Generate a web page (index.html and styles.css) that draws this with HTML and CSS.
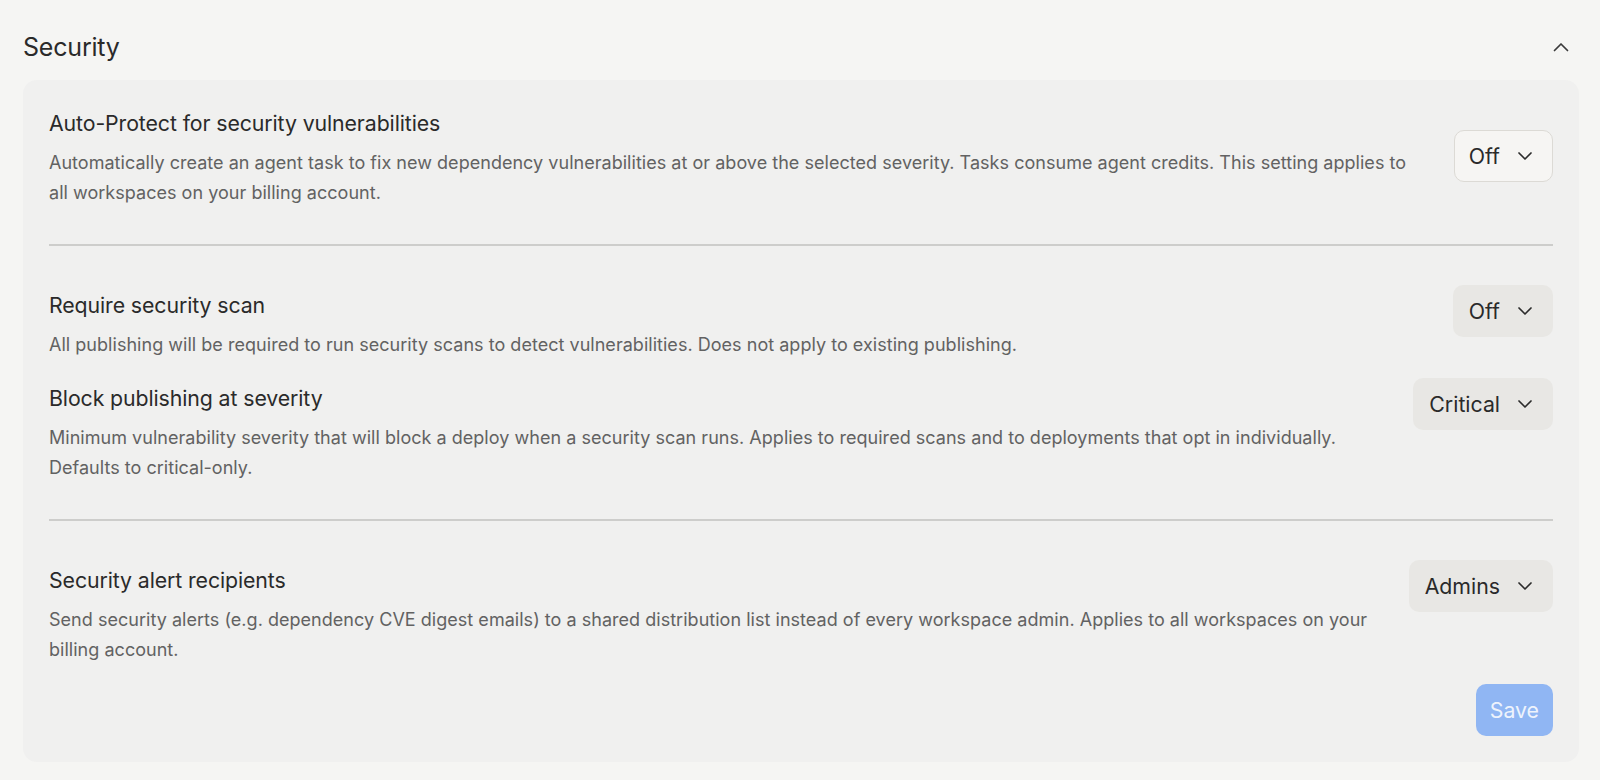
FILE: index.html
```html
<!DOCTYPE html>
<html lang="en">
<head>
<meta charset="utf-8">
<title>Security settings</title>
<link rel="stylesheet" href="styles.css">
</head>
<body>
<div class="page">
  <header class="section-head">
    <h2 class="section-title">Security</h2>
    <button class="collapse" aria-label="Collapse">
      <svg width="16" height="10" viewBox="0 0 16 10"><path d="M1.5 8.5 L8 2 L14.5 8.5" fill="none" stroke="#3a3a3a" stroke-width="1.7" stroke-linecap="round" stroke-linejoin="round"/></svg>
    </button>
  </header>

  <section class="card">
    <div class="row row-first">
      <div class="text">
        <div class="title">Auto-Protect for security vulnerabilities</div>
        <p class="desc">Automatically create an agent task to fix new dependency vulnerabilities at or above the selected severity. Tasks consume agent credits. This setting applies to all workspaces on your billing account.</p>
      </div>
      <button class="select outlined"><span>Off</span>
        <svg class="chev" width="16" height="10" viewBox="0 0 16 10"><path d="M2 2 L8 8 L14 2" fill="none" stroke="#2b2b2b" stroke-width="1.7" stroke-linecap="round" stroke-linejoin="round"/></svg>
      </button>
    </div>

    <hr class="divider">

    <div class="group">
      <div class="row">
        <div class="text">
          <div class="title">Require security scan</div>
          <p class="desc">All publishing will be required to run security scans to detect vulnerabilities. Does not apply to existing publishing.</p>
        </div>
        <button class="select"><span>Off</span>
          <svg class="chev" width="16" height="10" viewBox="0 0 16 10"><path d="M2 2 L8 8 L14 2" fill="none" stroke="#2b2b2b" stroke-width="1.7" stroke-linecap="round" stroke-linejoin="round"/></svg>
        </button>
      </div>
      <div class="row">
        <div class="text">
          <div class="title">Block publishing at severity</div>
          <p class="desc">Minimum vulnerability severity that will block a deploy when a security scan runs. Applies to required scans and to deployments that opt in individually. Defaults to critical-only.</p>
        </div>
        <button class="select"><span>Critical</span>
          <svg class="chev" width="16" height="10" viewBox="0 0 16 10"><path d="M2 2 L8 8 L14 2" fill="none" stroke="#2b2b2b" stroke-width="1.7" stroke-linecap="round" stroke-linejoin="round"/></svg>
        </button>
      </div>
    </div>

    <hr class="divider">

    <div class="row">
      <div class="text">
        <div class="title">Security alert recipients</div>
        <p class="desc">Send security alerts (e.g. dependency CVE digest emails) to a shared distribution list instead of every workspace admin. Applies to all workspaces on your billing account.</p>
      </div>
      <button class="select"><span>Admins</span>
        <svg class="chev" width="16" height="10" viewBox="0 0 16 10"><path d="M2 2 L8 8 L14 2" fill="none" stroke="#2b2b2b" stroke-width="1.7" stroke-linecap="round" stroke-linejoin="round"/></svg>
      </button>
    </div>

    <div class="actions">
      <button class="save" disabled>Save</button>
    </div>
  </section>
</div>
</body>
</html>
```

FILE: styles.css
```css
* { box-sizing: border-box; }

html, body {
  margin: 0;
  padding: 0;
  background: #f5f5f3;
  font-family: Inter, "Noto Sans", "Liberation Sans", sans-serif;
  color: #2a2a2a;
}

.page {
  padding: 26px 21px 20px 23px;
}

.section-head {
  display: flex;
  align-items: center;
  justify-content: space-between;
  height: 42px;
  margin-bottom: 12px;
}

.section-title {
  margin: 0;
  font-size: 25px;
  font-weight: 400;
  letter-spacing: -0.2px;
  color: #2a2a2a;
}

.collapse {
  background: none;
  border: 0;
  padding: 0;
  margin-right: 10px;
  width: 16px;
  height: 10px;
  display: flex;
  cursor: pointer;
}

.card {
  background: #f0f0ef;
  border-radius: 14px;
  padding: 28px 26px 26px 26px;
}

.row {
  display: flex;
  align-items: flex-start;
  justify-content: space-between;
  gap: 34px;
}

.text {
  flex: 1;
  min-width: 0;
  padding-top: 6px;
}

.row-first .text {
  padding-top: 1px;
}

.row-first .select {
  margin-top: 22px;
}

.title {
  font-size: 21.3px;
  line-height: 28px;
  color: #2a2a2a;
  letter-spacing: -0.1px;
}

.desc {
  margin: 11px 0 0 0;
  font-size: 18px;
  line-height: 30px;
  color: #626262;
  letter-spacing: 0.03px;
}

.select {
  flex: none;
  display: flex;
  align-items: center;
  gap: 17px;
  height: 52px;
  padding: 0 19px 0 15px;
  border: 1px solid transparent;
  border-radius: 10px;
  background: #e8e7e4;
  font-family: inherit;
  font-size: 21.3px;
  color: #2a2a2a;
  cursor: pointer;
}

.select.outlined {
  background: #f6f5f3;
  border-color: #dcdad5;
  padding-left: 14px;
}

.chev {
  display: block;
}

.divider {
  border: 0;
  border-top: 2px solid #cdcdcb;
  margin: 36px 0 39px 0;
}

.group {
  display: flex;
  flex-direction: column;
  gap: 18px;
}

.actions {
  display: flex;
  justify-content: flex-end;
  margin-top: 19px;
}

.save {
  height: 52px;
  padding: 0 14px;
  border: 0;
  border-radius: 10px;
  background: #90b6f3;
  color: #eef3fc;
  font-family: inherit;
  font-size: 21.3px;
}
```
